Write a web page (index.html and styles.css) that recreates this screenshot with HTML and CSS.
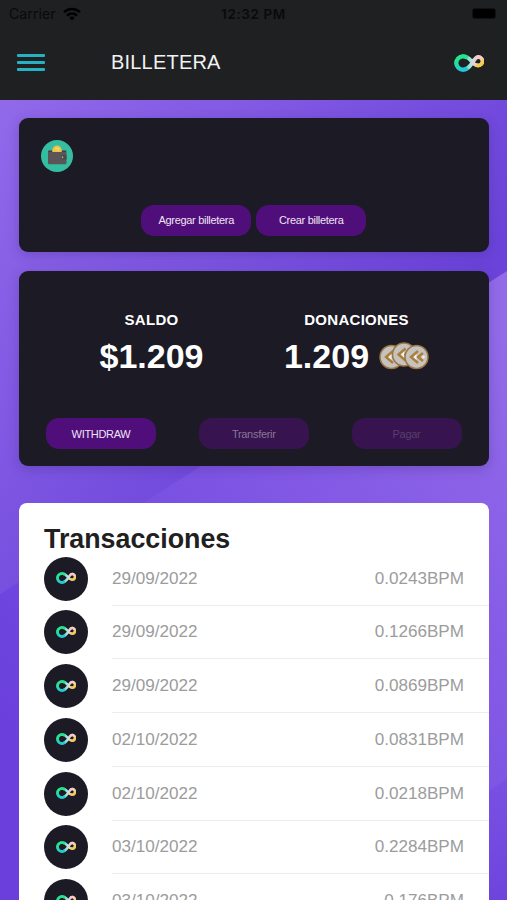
FILE: index.html
```html
<!DOCTYPE html>
<html lang="es">
<head>
    <meta charset="UTF-8">
    <meta name="viewport" content="width=device-width, initial-scale=1.0">
    <title>Billetera</title>
    <link rel="stylesheet" href="styles.css">
</head>
<body>
    <svg class="fondo" viewBox="0 0 507 900" preserveAspectRatio="none">
        <defs>
            <linearGradient id="banda1" gradientUnits="userSpaceOnUse" x1="0" y1="100" x2="370" y2="400">
                <stop offset="0" stop-color="#9169ea"/>
                <stop offset="1" stop-color="#6b43da"/>
            </linearGradient>
            <linearGradient id="banda2" gradientUnits="userSpaceOnUse" x1="500" y1="330" x2="20" y2="750">
                <stop offset="0" stop-color="#936be9"/>
                <stop offset="0.4" stop-color="#8258e5"/>
                <stop offset="0.8" stop-color="#7047e0"/>
                <stop offset="1" stop-color="#6a3fdb"/>
            </linearGradient>
            <linearGradient id="banda3" gradientUnits="userSpaceOnUse" x1="507" y1="780" x2="495" y2="900">
                <stop offset="0" stop-color="#7a50e3"/>
                <stop offset="1" stop-color="#6e44dd"/>
            </linearGradient>
            <linearGradient id="infinito" gradientUnits="userSpaceOnUse" x1="0" y1="0" x2="30" y2="0">
                <stop offset="0" stop-color="#19e39a"/>
                <stop offset="0.35" stop-color="#3fdcc0"/>
                <stop offset="0.6" stop-color="#c9e2dc"/>
                <stop offset="0.75" stop-color="#f2c9c4"/>
                <stop offset="1" stop-color="#f6cf45"/>
            </linearGradient>
            <linearGradient id="aroVerde" x1="0.3" y1="0" x2="0.6" y2="1">
                <stop offset="0.2" stop-color="#22e58c"/>
                <stop offset="1" stop-color="#1fc8dc"/>
            </linearGradient>
            <linearGradient id="aroDorado" x1="0.3" y1="0" x2="0.6" y2="1">
                <stop offset="0.2" stop-color="#f3cbd0"/>
                <stop offset="0.9" stop-color="#f5cd3f"/>
            </linearGradient>
            <symbol id="logo" viewBox="0 0 30 18">
                <path d="M16.500 6.200C14.500 3.600 12 2.300 9 2.300a6.700 6.700 0 1 0 0 13.400c4.500 0 7-3.500 9.500-7C20.500 5 22 3 24.300 3a4.200 4.200 0 0 1 0 8.500C21 11.500 18.500 9 16.500 6.200Z" fill="none" stroke="url(#infinito)" stroke-width="3.800"/>
                <path d="M13.500 14A6.700 6.700 0 1 1 13.500 4" fill="none" stroke="url(#aroVerde)" stroke-width="4.200"/>
                <path d="M22 3.700A4.200 4.200 0 1 1 22 10.800" fill="none" stroke="url(#aroDorado)" stroke-width="3.200"/>
            </symbol>
        </defs>
        <rect width="507" height="900" fill="url(#banda1)"/>
        <path d="M507 271L0 594V900H507Z" fill="url(#banda2)"/>
        <path d="M507 779L320 900H507Z" fill="url(#banda3)"/>
    </svg>

    <header>
        <div class="status-bar">
            <div class="carrier">
                <span>Carrier</span>
                <svg width="18" height="14" viewBox="0 0 18 14">
                    <g fill="none" stroke="#000" stroke-width="2.500">
                        <path d="M1 5.200a11.500 11.500 0 0 1 16 0"/>
                        <path d="M4 8.500a7.300 7.300 0 0 1 10 0"/>
                    </g>
                    <path d="M6.300 10.800a4 4 0 0 1 5.400 0L9 13.500Z"/>
                </svg>
            </div>
            <span class="clock">12:32 PM</span>
            <div class="battery"></div>
        </div>
        <nav>
            <button class="hamburger" aria-label="Menú">
                <span></span><span></span><span></span>
            </button>
            <h1>BILLETERA</h1>
            <svg class="nav-logo"><use href="#logo"/></svg>
        </nav>
    </header>

    <main>
        <section class="card wallet-card">
            <svg class="wallet-icon" viewBox="0 0 32 32">
                <circle cx="16" cy="16" r="16" fill="#35bda2"/>
                <rect x="7" y="10.300" width="18.500" height="14" rx="1.200" fill="#5a5657"/>
                <path d="M7.500 11.500h17.500" stroke="#444142"/>
                <path d="M11.300 12V10.300a4.700 4.700 0 0 1 9.400 0V12Z" fill="#efc24b"/>
                <path d="M14.300 9l1.700-1 2 1.300-1.500 1.500" fill="none" stroke="#f9e391"/>
                <path d="M25.500 15h-3.500a2 2 0 0 0 0 4.500h3.500Z" fill="#4d4a4b"/>
                <circle cx="21.500" cy="17.200" r="0.800" fill="#c9c6c5"/>
            </svg>
            <div class="wallet-actions">
                <button class="btn">Agregar billetera</button>
                <button class="btn">Crear billetera</button>
            </div>
        </section>

        <section class="card balance-card">
            <div class="balances">
                <div class="balance">
                    <h3>SALDO</h3>
                    <p>$1.209</p>
                </div>
                <div class="balance">
                    <h3>DONACIONES</h3>
                    <p>1.209
                        <svg class="coins" viewBox="0 0 50 28">
                            <defs>
                                <g id="moneda">
                                    <circle r="11.500" fill="#c6c2c0" stroke="#9b7640" stroke-width="1.500"/>
                                    <path d="M1.500-6L-5.500 0L1.500 6M6.500-4L1.500 0L6.500 4" fill="none" stroke="#a98038" stroke-width="2.400"/>
                                    <path d="M0-3L-3 0L0 3Z" fill="#f6f2ec"/>
                                    <path d="M6-2L9 0L6 2Z" fill="#f6f2ec"/>
                                </g>
                            </defs>
                            <use href="#moneda" x="12.500" y="15"/>
                            <use href="#moneda" x="25" y="12.500"/>
                            <use href="#moneda" x="37.500" y="15"/>
                        </svg>
                    </p>
                </div>
            </div>
            <div class="balance-actions">
                <button class="btn">WITHDRAW</button>
                <button class="btn inactive">Transferir</button>
                <button class="btn inactive disabled">Pagar</button>
            </div>
        </section>

        <section class="transactions">
            <h2>Transacciones</h2>
            <ul id="lista"></ul>
        </section>
    </main>

    <script>
const transacciones = [
    { fecha: '29/09/2022', monto: '0.0243' },
    { fecha: '29/09/2022', monto: '0.1266' },
    { fecha: '29/09/2022', monto: '0.0869' },
    { fecha: '02/10/2022', monto: '0.0831' },
    { fecha: '02/10/2022', monto: '0.0218' },
    { fecha: '03/10/2022', monto: '0.2284' },
    { fecha: '03/10/2022', monto: '0.176' }
];

const lista = document.getElementById('lista');

transacciones.forEach(t => {
    const li = document.createElement('li');
    li.innerHTML = `
        <div class="avatar"><svg><use href="#logo"/></svg></div>
        <div class="row">
            <span>${t.fecha}</span>
            <span>${t.monto}BPM</span>
        </div>
    `;
    lista.appendChild(li);
});
    </script>
</body>
</html>
```

FILE: styles.css
```css
* {
    box-sizing: border-box;
}
body {
    margin: 0;
    height: 900px;
    overflow: hidden;
    position: relative;
    background-color: #7a50e0;
    font-family: "Liberation Sans", Arial, sans-serif;
}
h1, h2, h3, p, ul {
    margin: 0;
    padding: 0;
}
button {
    border: none;
    padding: 0;
    font-family: inherit;
    cursor: pointer;
}
.fondo {
    position: absolute;
    top: 0;
    left: 0;
    width: 100%;
    height: 100%;
    z-index: -1;
}
header {
    height: 99.5px;
    background-color: #1e2022;
}
.status-bar {
    display: grid;
    grid-template-columns: 1fr auto 1fr;
    align-items: center;
    height: 27px;
    padding: 0 9px;
    font-family: Inter, sans-serif;
    font-size: 14px;
    color: #0a0a0b;
}
.carrier {
    display: flex;
    align-items: center;
    gap: 7px;
    letter-spacing: 0.1px;
}
.clock {
    font-size: 13.5px;
    font-weight: 600;
    letter-spacing: 0.6px;
}
.battery {
    justify-self: end;
    width: 24px;
    height: 11px;
    margin-right: 2px;
    border-radius: 3px;
    background-color: #000;
    border: 1px solid #111213;
}
nav {
    display: flex;
    align-items: center;
    height: 71px;
    padding: 0 23px 0 17px;
}
.hamburger {
    display: flex;
    flex-direction: column;
    gap: 4.4px;
    width: 28px;
    background: none;
}
.hamburger span {
    height: 2.8px;
    border-radius: 1px;
    background-color: #25b3c3;
}
nav h1 {
    flex: 1;
    margin-left: 66px;
    color: #f2f2f2;
    font-size: 20px;
    font-weight: normal;
    letter-spacing: 0.2px;
}
.nav-logo {
    width: 30px;
    height: 18px;
}
main {
    padding: 18.8px 18.5px 0 19px;
}
.card {
    border-radius: 9px;
    background-color: #1c1a25;
    box-shadow: 0 3px 12px rgba(60, 40, 120, 0.3);
}
.wallet-card {
    height: 134px;
    padding: 21.5px 22px 16.5px;
    display: flex;
    flex-direction: column;
    justify-content: space-between;
}
.wallet-icon {
    width: 32px;
    height: 32px;
}
.wallet-actions {
    display: flex;
    justify-content: center;
    gap: 5px;
}
.btn {
    width: 110px;
    height: 31px;
    border-radius: 13px;
    background-color: #500e7a;
    color: #eee4f5;
    font-size: 11px;
    letter-spacing: -0.3px;
}
.btn.inactive {
    background-color: #371350;
    color: #8a7597;
}
.btn.disabled {
    color: #58406a;
}
.balance-card {
    height: 195px;
    margin-top: 18.5px;
    padding: 40px 27px 16.5px;
    display: flex;
    flex-direction: column;
    justify-content: space-between;
}
.balances {
    display: grid;
    grid-template-columns: 211px 199px;
    color: #fff;
    text-align: center;
}
.balance h3 {
    font-size: 15px;
    line-height: 18px;
    letter-spacing: 0.3px;
}
.balance p {
    display: flex;
    justify-content: center;
    align-items: center;
    gap: 10px;
    margin-top: 7px;
    font-size: 34px;
    font-weight: bold;
    line-height: 40px;
}
.coins {
    width: 50px;
    height: 28px;
}
.balance-actions {
    display: flex;
    justify-content: space-between;
}
.transactions {
    margin-top: 37px;
    padding: 19px 0 0 25px;
    border-radius: 8px;
    background-color: #fff;
}
.transactions h2 {
    color: #202020;
    font-size: 26.8px;
    line-height: 35px;
    height: 30px;
}
.transactions ul {
    list-style: none;
}
.transactions li {
    display: flex;
    align-items: center;
    gap: 24px;
    height: 53.75px;
}
.avatar {
    display: flex;
    align-items: center;
    justify-content: center;
    width: 44px;
    height: 44px;
    border-radius: 50%;
    background-color: #1c1a25;
}
.avatar svg {
    width: 20px;
    height: 12px;
    margin-bottom: 1px;
}
.row {
    flex: 1;
    display: flex;
    justify-content: space-between;
    align-items: center;
    height: 100%;
    padding: 1px 24.5px 0 0;
    border-bottom: 1.5px solid #ececee;
    color: #9c9c9c;
    font-size: 17.1px;
}
```
